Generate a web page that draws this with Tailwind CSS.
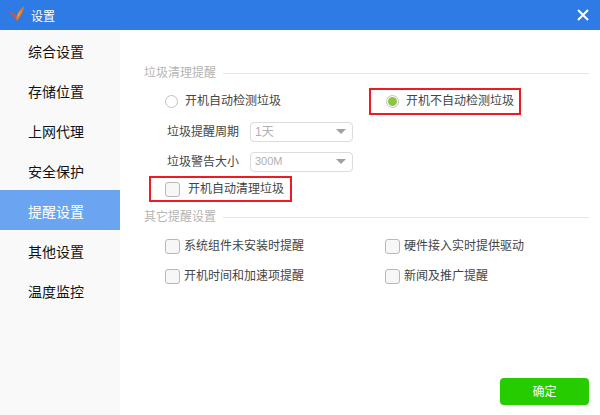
<!DOCTYPE html>
<html lang="zh-CN">
<head>
  <meta charset="UTF-8">
  <meta name="viewport" content="width=device-width, initial-scale=1.0">
  <title>设置</title>
  <script src="https://cdn.jsdelivr.net/npm/@tailwindcss/browser@4"></script>
</head>
<body class="bg-white w-[600px] h-[415px] overflow-hidden font-['Liberation_Sans','Noto_Sans_CJK_SC',sans-serif] text-xs text-[#444]">

  <!-- title bar -->
  <header class="h-[30px] bg-[#2f7be5] flex items-center justify-between pl-2 pr-[11px] text-white">
    <div class="flex items-center gap-[7px]">
      <svg class="mb-[2px]" width="16" height="16" viewBox="0 0 16 16">
        <path d="M1 6 C3 6 6 7 9 11 L9 15 C7 11 4 8 1 6 Z" fill="#e8502a"/>
        <path d="M16 0 C15.5 5 13 10 9 15 C7 11 10 6 16 0 Z" fill="#f07a1a"/>
        <path d="M13 4 C12 7 11 9 9.5 11.5 C9 9.5 10.5 7 13 4 Z" fill="#f5b041"/>
      </svg>
      <span class="leading-none pt-[3px]">设置</span>
    </div>
    <svg width="12" height="12" viewBox="0 0 12 12" stroke="white" stroke-width="2">
      <path d="M1 1 L11 11 M11 1 L1 11"/>
    </svg>
  </header>

  <div class="flex h-[385px]">
    <!-- sidebar -->
    <nav class="w-[120px] bg-[#f9f9f9] text-sm text-[#111]">
      <div class="h-10 pl-7 pt-1 flex items-center">综合设置</div>
      <div class="h-10 pl-7 pt-1 flex items-center">存储位置</div>
      <div class="h-10 pl-7 pt-1 flex items-center">上网代理</div>
      <div class="h-10 pl-7 pt-1 flex items-center">安全保护</div>
      <div class="h-10 pl-7 pt-1 flex items-center bg-[#6ba5f2] text-white">提醒设置</div>
      <div class="h-10 pl-7 pt-1 flex items-center">其他设置</div>
      <div class="h-10 pl-7 pt-1 flex items-center">温度监控</div>
    </nav>

    <!-- content -->
    <main class="flex-1 flex flex-col pl-6 pr-[11px] pt-[34px]">
      <div class="h-[18px] flex items-center gap-[7px] text-[#b5b5b5]">
        <span>垃圾清理提醒</span>
        <div class="flex-1 h-px bg-[#e5e5e5]"></div>
      </div>

      <div class="flex mt-[6px] h-[26px] items-center">
        <label class="w-[225px] pl-[21px] flex items-center gap-[7px]">
          <span class="w-[13px] h-[13px] rounded-full border border-[#c2c2c2] bg-white"></span>
          <span>开机自动检测垃圾</span>
        </label>
        <label class="w-[152px] h-[27px] border-2 border-[#ed1c24] pl-[15px] flex items-center gap-[7px]">
          <span class="w-[13px] h-[13px] rounded-full border border-[#c2c2c2] bg-white flex items-center justify-center">
            <span class="w-[9px] h-[9px] rounded-full bg-[#8cc63f]"></span>
          </span>
          <span>开机不自动检测垃圾</span>
        </label>
      </div>

      <div class="flex items-center mt-[7px] h-[21px] pl-[23px] gap-[10px]">
        <span class="w-[73px]">垃圾提醒周期</span>
        <div class="w-[103px] h-[20px] border border-[#dcdcdc] rounded-sm pl-1 pr-[6px] flex items-center justify-between text-[#b0b0b0]">
          <span>1天</span>
          <span class="w-0 h-0 border-x-[5px] border-x-transparent border-t-[5px] border-t-[#a0a0a0]"></span>
        </div>
      </div>
      <div class="flex items-center mt-[9px] h-[21px] pl-[23px] gap-[10px]">
        <span class="w-[73px]">垃圾警告大小</span>
        <div class="w-[103px] h-[20px] border border-[#dcdcdc] rounded-sm pl-1 pr-[6px] flex items-center justify-between text-[#b0b0b0]">
          <span class="text-[11px]">300M</span>
          <span class="w-0 h-0 border-x-[5px] border-x-transparent border-t-[5px] border-t-[#a0a0a0]"></span>
        </div>
      </div>

      <label class="w-[143px] h-[26px] mt-[4px] ml-[5px] border-2 border-[#ed1c24] pl-[14px] flex items-center gap-2">
        <span class="w-[15px] h-[15px] rounded-[3px] border border-[#b8b8b8] bg-[#f7f7f7]"></span>
        <span>开机自动清理垃圾</span>
      </label>

      <div class="h-[18px] mt-[6px] flex items-center gap-[7px] text-[#b5b5b5]">
        <span>其它提醒设置</span>
        <div class="flex-1 h-px bg-[#e5e5e5]"></div>
      </div>

      <div class="grid grid-cols-[220px_1fr] auto-rows-[30px] mt-[5px] pl-[21px] items-center">
        <label class="flex items-center gap-1">
          <span class="w-[15px] h-[15px] rounded-[3px] border border-[#b8b8b8] bg-[#f7f7f7]"></span>
          <span>系统组件未安装时提醒</span>
        </label>
        <label class="flex items-center gap-1">
          <span class="w-[15px] h-[15px] rounded-[3px] border border-[#b8b8b8] bg-[#f7f7f7]"></span>
          <span>硬件接入实时提供驱动</span>
        </label>
        <label class="flex items-center gap-1">
          <span class="w-[15px] h-[15px] rounded-[3px] border border-[#b8b8b8] bg-[#f7f7f7]"></span>
          <span>开机时间和加速项提醒</span>
        </label>
        <label class="flex items-center gap-1">
          <span class="w-[15px] h-[15px] rounded-[3px] border border-[#b8b8b8] bg-[#f7f7f7]"></span>
          <span>新闻及推广提醒</span>
        </label>
      </div>

      <div class="mt-auto mb-[10px] flex justify-end">
        <button class="w-[89px] h-[27px] bg-[#26cc00] rounded-sm text-white">确定</button>
      </div>
    </main>
  </div>
</body>
</html>
